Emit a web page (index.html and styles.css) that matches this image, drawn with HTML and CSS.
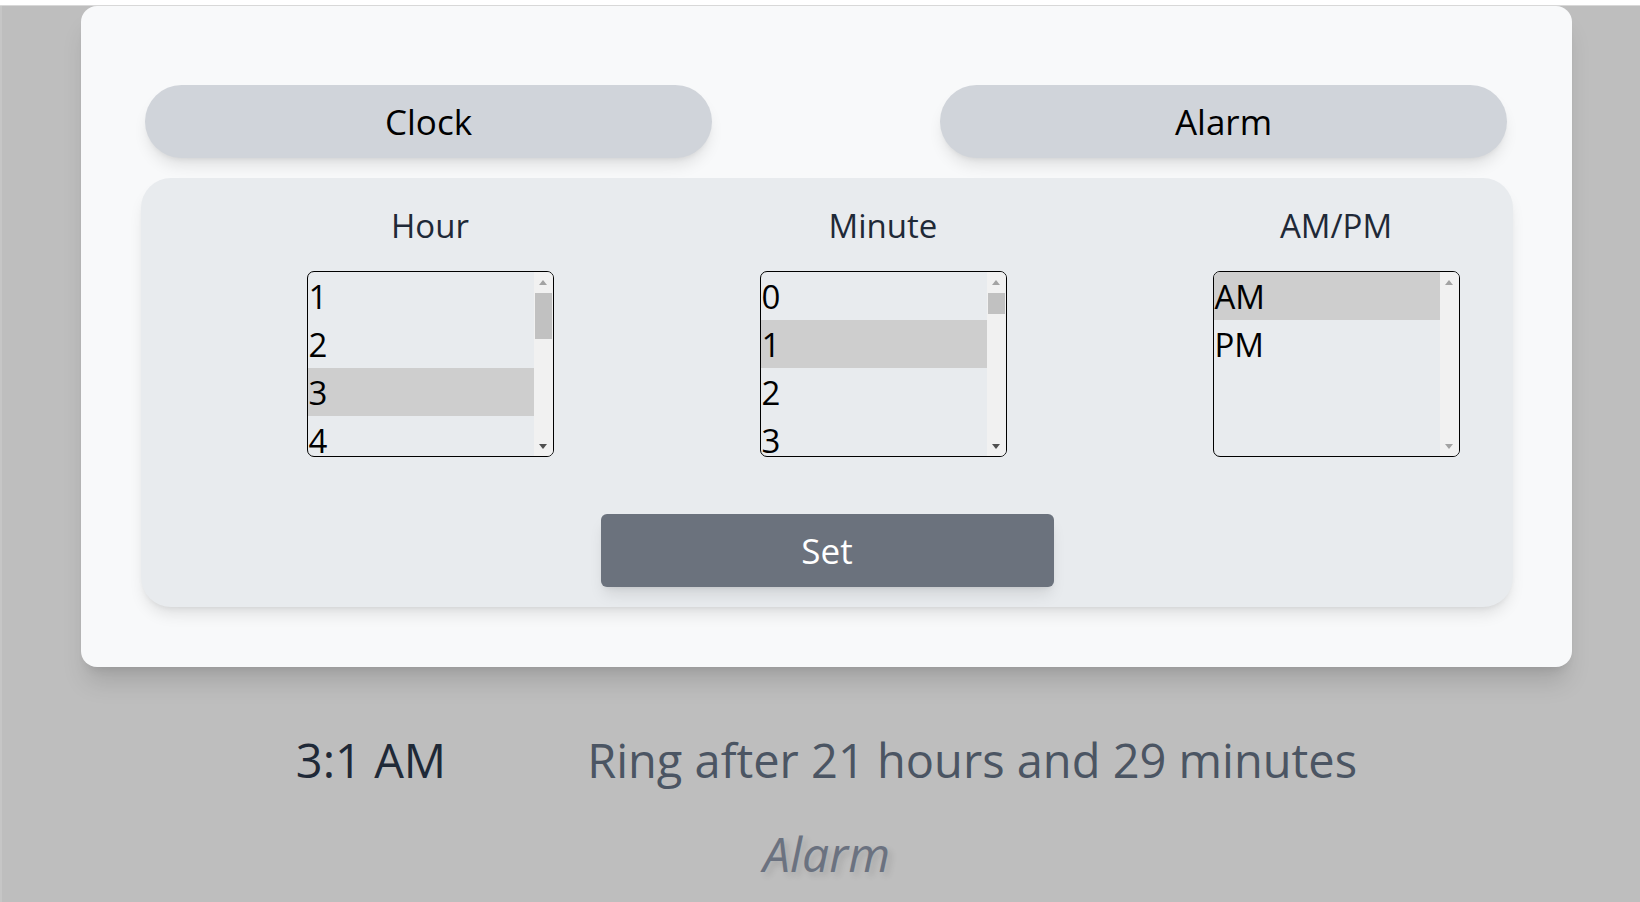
FILE: index.html
```html
<!DOCTYPE html>
<html lang="en">
<head>
<meta charset="utf-8">
<title>Alarm</title>
<link rel="stylesheet" href="styles.css">
</head>
<body>
<div class="topbar"></div>
<main class="page">
  <div class="wrap">
    <section class="card">
      <div class="tabs">
        <button class="tab">Clock</button>
        <button class="tab">Alarm</button>
      </div>
      <div class="panel">
        <div class="pickers">
          <div class="picker">
            <div class="picker-label">Hour</div>
            <div class="listbox" role="listbox">
              <div class="options">
                <div class="option">1</div>
                <div class="option">2</div>
                <div class="option selected">3</div>
                <div class="option">4</div>
              </div>
              <div class="scrollbar">
                <div class="sb-btn"><span class="arrow up"></span></div>
                <div class="track"><span class="thumb thumb-hour"></span></div>
                <div class="sb-btn"><span class="arrow down active"></span></div>
              </div>
            </div>
          </div>
          <div class="picker">
            <div class="picker-label">Minute</div>
            <div class="listbox" role="listbox">
              <div class="options">
                <div class="option">0</div>
                <div class="option selected">1</div>
                <div class="option">2</div>
                <div class="option">3</div>
              </div>
              <div class="scrollbar">
                <div class="sb-btn"><span class="arrow up"></span></div>
                <div class="track"><span class="thumb thumb-minute"></span></div>
                <div class="sb-btn"><span class="arrow down active"></span></div>
              </div>
            </div>
          </div>
          <div class="picker">
            <div class="picker-label">AM/PM</div>
            <div class="listbox" role="listbox">
              <div class="options">
                <div class="option selected">AM</div>
                <div class="option">PM</div>
              </div>
              <div class="scrollbar">
                <div class="sb-btn"><span class="arrow up"></span></div>
                <div class="track"></div>
                <div class="sb-btn"><span class="arrow down"></span></div>
              </div>
            </div>
          </div>
        </div>
        <button class="set">Set</button>
      </div>
    </section>
    <div class="status">
      <span class="time">3:1 AM</span>
      <span class="remain">Ring after 21 hours and 29 minutes</span>
    </div>
    <div class="mode">Alarm</div>
  </div>
</main>
</body>
</html>
```

FILE: styles.css
```css
* { box-sizing: border-box; }

html, body {
  margin: 0;
  padding: 0;
}

body {
  background: #bebebe;
  font-family: "Open Sans", "Noto Sans", sans-serif;
  color: #111827;
}

.topbar {
  height: 6px;
  background: #ffffff;
  border-bottom: 1px solid #d8d8d8;
}

.page {
  min-height: calc(100vh - 6px);
  border-left: 2px solid #c6c6c6;
  overflow: hidden;
}

.wrap {
  width: 1491px;
  margin-left: 79px;
}

.card {
  background: #f8f9fa;
  border-radius: 16px;
  padding: 79px 59px 60px 60px;
  box-shadow: 0 20px 25px -5px rgba(0, 0, 0, 0.13), 0 8px 10px -6px rgba(0, 0, 0, 0.1);
}

.tabs {
  display: flex;
  justify-content: space-between;
  padding: 0 6px 0 4px;
  margin-bottom: 20px;
}

.tab {
  width: 567px;
  height: 73px;
  border: none;
  border-radius: 9999px;
  background: #d0d4da;
  font-family: inherit;
  font-size: 35px;
  color: #000;
  padding: 0;
  box-shadow: 0 10px 15px -3px rgba(0, 0, 0, 0.1), 0 4px 6px -4px rgba(0, 0, 0, 0.1);
}

.panel {
  background: #e8ebee;
  border-radius: 30px;
  padding: 27px 0 20px;
  box-shadow: 0 10px 15px -3px rgba(0, 0, 0, 0.1), 0 4px 6px -4px rgba(0, 0, 0, 0.1);
}

.pickers {
  display: flex;
  justify-content: center;
  gap: 206px;
  padding-left: 112px;
}

.picker {
  width: 247px;
}

.picker-label {
  height: 42px;
  line-height: 42px;
  font-size: 33px;
  text-align: center;
  color: #1f2937;
  margin-bottom: 24px;
  white-space: nowrap;
}

.listbox {
  display: flex;
  height: 186px;
  border: 1px solid #000;
  border-radius: 7px;
  overflow: hidden;
}

.options {
  flex: 1;
  overflow: hidden;
}

.option {
  height: 48px;
  line-height: 48px;
  font-size: 33px;
  color: #000;
  padding: 1px 0 0 1px;
}

.option.selected {
  background: #cecece;
}

.scrollbar {
  width: 19px;
  background: #f1f1f1;
  display: flex;
  flex-direction: column;
}

.sb-btn {
  height: 20px;
  display: flex;
  align-items: center;
  justify-content: center;
}

.track {
  flex: 1;
  padding: 1px 1px 0;
}

.thumb {
  display: block;
  background: #c1c1c1;
}

.thumb-hour { height: 46px; }
.thumb-minute { height: 21px; }

.arrow {
  width: 0;
  height: 0;
  border-left: 4px solid transparent;
  border-right: 4px solid transparent;
}

.arrow.up {
  border-bottom: 5px solid #a3a3a3;
}

.arrow.down {
  border-top: 5px solid #a3a3a3;
}

.arrow.down.active {
  border-top-color: #505050;
}

.set {
  display: block;
  width: 453px;
  height: 73px;
  margin: 57px auto 0;
  border: none;
  border-radius: 6px;
  background: #6b727d;
  color: #ffffff;
  font-family: inherit;
  font-size: 35px;
  padding: 0;
  box-shadow: 0 10px 15px -3px rgba(0, 0, 0, 0.1), 0 4px 6px -4px rgba(0, 0, 0, 0.1);
}

.status {
  display: flex;
  justify-content: center;
  gap: 141px;
  margin-top: 61px;
  font-size: 47px;
  line-height: 64px;
  white-space: nowrap;
}

.time {
  color: #1f2937;
}

.remain {
  color: #4b5563;
}

.mode {
  margin-top: 30px;
  text-align: center;
  font-size: 48px;
  line-height: 64px;
  font-style: italic;
  color: #6b7280;
  text-shadow: 4px 4px 6px rgba(0, 0, 0, 0.12);
}
```
